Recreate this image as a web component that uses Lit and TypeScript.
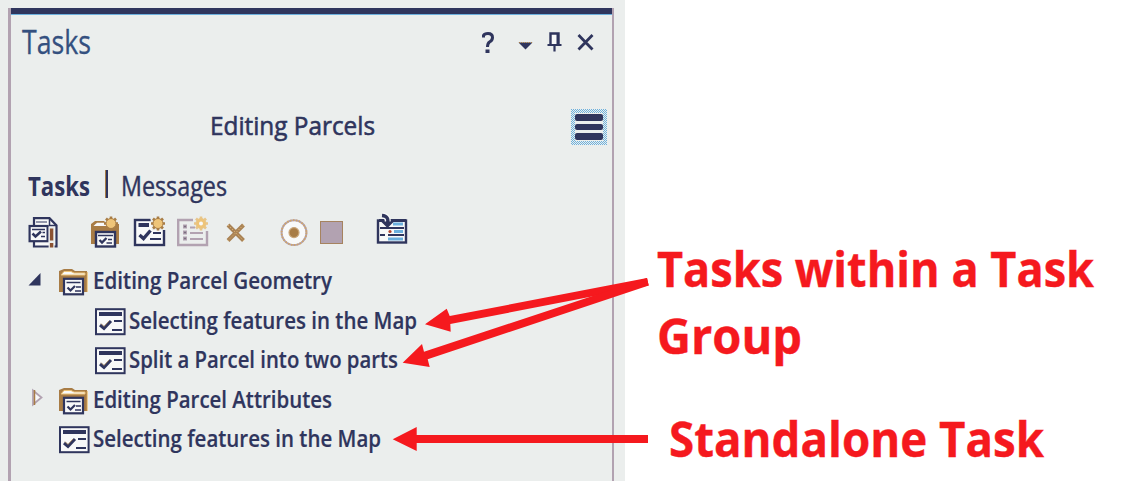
import { LitElement, html, svg, css, nothing } from "lit";
import { customElement, property } from "lit/decorators.js";

const NAVY = "#2f355d";
const GOLD = "#a87c45";
const SAND = "#eec478";
const MAUVE = "#b2a2b1";
const PAPER = "#f8f9f9";

/** One line of text set to an exact width. */
@customElement("fit-text")
class FitText extends LitElement {
  @property() text = "";
  @property({ type: Number }) width = 100;
  @property({ type: Number }) height = 39;
  @property({ type: Number }) baseline = 26;

  static styles = css`
    :host { display: block; flex: none; }
    svg { display: block; overflow: visible; }
    text { fill: currentColor; stroke: currentColor; stroke-width: var(--text-weight, 0); }
  `;

  render() {
    return html`<svg width=${this.width} height=${this.height}>
      <text x="0" y=${this.baseline} textLength=${this.width} lengthAdjust="spacingAndGlyphs">${this.text}</text>
    </svg>`;
  }
}

const sun = (x: number, y: number, rim: string = GOLD) => svg`
  <g transform="translate(${x} ${y})">
    <path d="M0-7V7M-7 0H7M-5-5L5 5M5-5L-5 5" stroke=${rim} stroke-width="2.6"/>
    <circle r="5" fill=${SAND} stroke=${rim} stroke-width="1"/>
  </g>`;

const icon = (x: number, y: number, w: number, h: number, body: unknown) =>
  html`<svg class="icon" width=${w} height=${h} viewBox="${x} ${y} ${w} ${h}" fill="none">${body}</svg>`;

const taskIcon = () => icon(0, 0, 31, 28, svg`
  <rect x="1" y="1.2" width="28.6" height="25" fill=${PAPER} stroke=${NAVY} stroke-width="2"/>
  <path d="M4 6H27" stroke=${NAVY} stroke-width="4"/>
  <path d="M19 13H27M17 22H27" stroke=${NAVY} stroke-width="2"/>
  <path d="M5 17L9 20.5L16 13" stroke=${NAVY} stroke-width="3"/>
  <path d="M6 15.5L9 18.5L14 13" stroke=${GOLD} stroke-width=".7"/>`);

const folderIcon = () => icon(0, 0, 30, 28, svg`
  <path d="M0 24V3L5 1H13L16 3H28V24Z" fill=${GOLD}/>
  <path d="M2 7L5 3.500H12L15 5H26V7Z" fill=${PAPER} stroke=${SAND} stroke-width="1"/>
  <path d="M28.300 4V24" stroke=${SAND}/>
  <rect x="5" y="10.800" width="19" height="15.500" fill=${PAPER} stroke=${NAVY} stroke-width="2.200"/>
  <path d="M7.500 14.500H21.500" stroke=${NAVY} stroke-width="1.500"/>
  <path d="M8.500 19.500L11.500 22.500L16 18" stroke=${NAVY} stroke-width="2.200"/>
  <path d="M17 19H22M16 23H22" stroke=${NAVY} stroke-width="1.500"/>`);

const toolbar = () => [
  icon(27, 210, 60, 42, svg`
    <path d="M34 218.200H49.500L56.500 225.500V246.500H34Z" fill=${PAPER} stroke=${NAVY} stroke-width="2.200"/>
    <path d="M49.500 218V225.500H57" stroke=${NAVY} stroke-width="1.500"/>
    <path d="M36 222H47" stroke=${NAVY} stroke-width="1"/>
    <rect x="29.600" y="226" width="18" height="15.200" fill=${PAPER} stroke=${NAVY} stroke-width="2.200"/>
    <path d="M32 229.500H45M42.500 232.500H45M41 236.500H45" stroke=${NAVY} stroke-width="1.300"/>
    <path d="M32.500 233.500L35.500 236.500L41 231.500" stroke=${NAVY} stroke-width="2.500"/>
    <path d="M51.600 227V248" stroke="#ebeeed" stroke-width="6"/>
    <path d="M51.600 228.500V240.500M51.600 243V247.500" stroke="#8b5232" stroke-width="3.400"/>`),
  icon(87, 210, 44, 42, svg`
    <path d="M91 244V224L95 221H104L107 224H119V244Z" fill=${GOLD}/>
    <path d="M93.500 226L97 222.800H106V226Z" fill=${PAPER}/>
    <rect x="96" y="232" width="19" height="14.500" fill=${PAPER} stroke=${NAVY} stroke-width="2.400"/>
    <path d="M98 235.500H113" stroke=${NAVY} stroke-width="1.500"/>
    <path d="M99.500 240L102 242.500L106.500 238" stroke=${NAVY} stroke-width="2.400"/>
    <path d="M108 239.500H112M106.500 243H112" stroke=${NAVY} stroke-width="1.600"/>
    ${sun(111, 223.5)}`),
  icon(131, 210, 44, 42, svg`
    <rect x="135" y="220" width="29" height="25" fill=${PAPER} stroke=${NAVY} stroke-width="2.400"/>
    <path d="M138.500 225H149" stroke=${NAVY} stroke-width="4"/>
    <path d="M153 233H161M150 239H161" stroke=${NAVY} stroke-width="2.200"/>
    <path d="M150 216H166V230H152Z" fill="#ebeeed"/>
    <path d="M139.500 235L143.500 238.500L150.500 230.500" stroke=${NAVY} stroke-width="3.400"/>
    ${sun(158, 223.5)}`),
  icon(175, 210, 44, 42, svg`
    <path d="M193 220H178.200V245H207V231" stroke=${MAUVE} stroke-width="2.400"/>
    <path d="M183 226.500H187M183 232.500H187M183 238.500H187" stroke=${MAUVE} stroke-width="4"/>
    <path d="M184 226.500H186M184 232.500H186M184 238.500H186" stroke="#78707f" stroke-width="1.500"/>
    <path d="M190 227.500H195M190 233H203M190 239H203" stroke=${MAUVE} stroke-width="2"/>
    ${sun(201, 223.5, "#e8c588")}
    <circle cx="201" cy="223.500" r="2" fill=${PAPER}/>`),
  icon(219, 210, 57, 42, svg`
    <path d="M228 225L243.500 240.500M243.500 225L228 240.500" stroke="#aa8356" stroke-width="4"/>
    <path d="M228 225L243.500 240.500M243.500 225L228 240.500" stroke=${SAND} stroke-width="1" stroke-dasharray="1 2"/>`),
  icon(276, 210, 41, 42, svg`
    <circle cx="294" cy="232.600" r="12.400" fill=${PAPER} stroke=${MAUVE} stroke-width="2"/>
    <circle cx="294" cy="232.600" r="12.400" stroke="#d2a566" stroke-width="1.800" stroke-dasharray="1.500 1.500"/>
    <circle cx="294" cy="232.600" r="5" fill=${GOLD} stroke="#c9a679" stroke-width="1.200"/>`),
  icon(317, 210, 55, 42, svg`
    <rect x="320.500" y="221.500" width="22" height="22" fill=${MAUVE} stroke="#a6835f"/>`),
  icon(372, 210, 40, 42, svg`
    <rect x="378" y="220.500" width="28" height="22" fill=${PAPER} stroke=${NAVY} stroke-width="2.400"/>
    <path d="M379 220.500H406" stroke=${NAVY} stroke-width="3"/>
    <path d="M393 224H403M394 231.500H403M388 239H403" stroke="#6cb0dd" stroke-width="3"/>
    <path d="M380 228H404M380 235H385M388 235H404" stroke=${NAVY} stroke-width="2"/>
    <circle cx="390" cy="231.500" r="1.600" fill="#b2452f"/>
    <path d="M382 215.500Q389 216 387.500 223" stroke=${PAPER} stroke-width="6"/>
    <path d="M382 215.500Q389.500 216 387.500 224" stroke=${NAVY} stroke-width="3.400"/>
    <path d="M382 221.500L387.500 227L393 221.500" fill=${NAVY} stroke=${NAVY} stroke-width="1.500"/>`),
];

interface TreeItem {
  label: string;
  width: number;
  kind: "group" | "task";
  nested?: boolean;
  open?: boolean;
}

const ITEMS: TreeItem[] = [
  { label: "Editing Parcel Geometry", width: 239, kind: "group", open: true },
  { label: "Selecting features in the Map", width: 288, kind: "task", nested: true },
  { label: "Split a Parcel into two parts", width: 269, kind: "task", nested: true },
  { label: "Editing Parcel Attributes", width: 239, kind: "group", open: false },
  { label: "Selecting features in the Map", width: 288, kind: "task" },
];

@customElement("app-root")
class AppRoot extends LitElement {
  static styles = css`
    :host {
      display: block;
      position: relative;
      width: 1125px;
      height: 489px;
      overflow: hidden;
      background: #fff;
      color: #2f355d;
      font-family: "Open Sans", "Noto Sans", sans-serif;
    }
    .page { display: flex; }
    .backdrop {
      box-sizing: border-box;
      width: 625px;
      height: 481px;
      padding: 8px 11px 0 8px;
      background: #ebeeed;
    }
    .panel {
      box-sizing: border-box;
      height: 473px;
      border-left: 3px solid #b2a2b1;
      border-right: 2px solid #b2a2b1;
    }
    .bar { height: 6px; background: #2f355d; border-bottom: 1px solid #6cb0dd; }
    .icon { display: block; flex: none; }
    .title { display: flex; height: 75px; padding-left: 11px; font-size: 33px; color: #34507f; --text-weight: 0.3px; }
    .controls { display: flex; margin-left: 386px; }
    .caption { display: flex; height: 75px; padding-left: 199px; font-size: 26px; --text-weight: 0.6px; }
    .menu {
      display: flex;
      box-sizing: border-box;
      width: 36px;
      height: 36px;
      margin: 19px 0 0 196px;
      padding: 4px;
      background: repeating-conic-gradient(#6cb0dd 0 25%, #ebeeed 0 50%) 1px 0 / 2px 2px;
    }
    .bars {
      display: flex;
      flex: 1;
      flex-direction: column;
      justify-content: center;
      gap: 3px;
      background: #ebeeed;
    }
    .bars span { height: 6.500px; border-radius: 2px; background: #2f355d; }
    .tabs { display: flex; height: 45px; padding-left: 17px; font-size: 26.500px; --text-weight: 0.4px; }
    .active { font-weight: 700; --text-weight: 0; }
    .divider { width: 2px; height: 28px; margin: 5px 13px 0 15px; background: #2f355d; border-left: 1px solid #a87c45; }
    .toolbar { display: flex; height: 53px; padding-left: 16px; }
    .tree { font-size: 23.500px; font-weight: 600; --text-weight: 0.2px; }
    .row { display: flex; height: 39.500px; align-items: center; }
    .twist { width: 48px; flex: none; margin-bottom: 2px; }
    .nested .twist { width: 84px; }
    .glyph { width: 34px; flex: none; margin-bottom: 1px; }
    .notes {
      padding: 233.500px 0 0 32px;
      color: #f5191e;
      font-family: "Open Sans", "Noto Sans", sans-serif;
      font-size: 48.500px;
      font-weight: 700;
      --text-weight: 0.4px;
    }
    .standalone { margin: 35px 0 0 12px; }
    .arrows { position: absolute; left: 0; top: 0; fill: #f5191e; }
  `;

  private row(item: TreeItem) {
    return html`<div class="row ${item.nested ? "nested" : ""}">
      <div class="twist">
        ${item.kind === "group"
          ? icon(11, 0, 48, 28, item.open
            ? svg`<path d="M28.500 17.500L40.500 5V17.500Z" fill=${NAVY}/>`
            : svg`<path d="M33 4.500L41.500 11.500L33 18.500Z" fill=${PAPER} stroke=${MAUVE} stroke-width="1.800"/><path d="M34.500 4V19" stroke=${GOLD} stroke-width="1.500"/>`)
          : nothing}
      </div>
      <div class="glyph">${item.kind === "group" ? folderIcon() : taskIcon()}</div>
      <fit-text .text=${item.label} .width=${item.width} .height=${39} .baseline=${26.2}></fit-text>
    </div>`;
  }

  render() {
    return html`
      <div class="page">
        <div class="backdrop">
          <div class="panel">
            <div class="bar"></div>
            <div class="title">
              <fit-text .text=${"Tasks"} .width=${69} .baseline=${38.5}></fit-text>
              <div class="controls">
                ${icon(477, 15, 35, 50, svg`
                  <path d="M483.500 37.500V35.500Q484.500 33.500 488 33.500Q492.500 33.500 492.500 37.500Q492.500 40.500 489.500 42Q487.500 43.500 487.500 47" stroke=${NAVY} stroke-width="3"/>
                  <path d="M487.500 49.500V53" stroke=${NAVY} stroke-width="4"/>`)}
                ${icon(512, 15, 32, 50, svg`
                  <path d="M518.500 42.500H532.500L525.500 49.500Z" fill=${NAVY}/><path d="M519 42.500H532" stroke=${GOLD} stroke-dasharray="1 1"/>`)}
                ${icon(544, 15, 29, 50, svg`
                  <path d="M550.500 45V33.500H558.500V45" fill=${PAPER} stroke=${NAVY} stroke-width="2.400"/>
                  <path d="M557.500 33V45" stroke=${NAVY} stroke-width="2"/>
                  <path d="M547.500 45H561.500M554.500 45V51.500" stroke=${NAVY} stroke-width="2.200"/>`)}
                ${icon(573, 15, 28, 50, svg`
                  <path d="M578.500 35L592.500 49.500M592.500 35L578.500 49.500" stroke=${NAVY} stroke-width="2.800"/>`)}
              </div>
            </div>
            <div class="caption">
              <fit-text .text=${"Editing Parcels"} .width=${165} .height=${55} .baseline=${45}></fit-text>
              <div class="menu"><div class="bars"><span></span><span></span><span></span></div></div>
            </div>
            <div class="tabs">
              <fit-text class="active" .text=${"Tasks"} .width=${62} .baseline=${30.5}></fit-text>
              <div class="divider"></div>
              <fit-text .text=${"Messages"} .width=${106} .baseline=${30.5}></fit-text>
            </div>
            <div class="toolbar">${toolbar()}</div>
            <div class="tree">${ITEMS.map((item) => this.row(item))}</div>
          </div>
        </div>
        <div class="notes">
          <fit-text .text=${"Tasks within a Task"} .width=${437} .height=${67.5} .baseline=${53}></fit-text>
          <fit-text .text=${"Group"} .width=${145} .height=${67.5} .baseline=${53}></fit-text>
          <fit-text class="standalone" .text=${"Standalone Task"} .width=${375} .height=${68} .baseline=${53}></fit-text>
        </div>
      </div>
      <svg class="arrows" width="1125" height="489">
        <path d="M425 324.300L446.700 308.700L449.700 316L647 278L648.700 285.500L450.300 324L450.700 331.700Z"/>
        <path d="M402.700 362.700L422 344L424 351.700L647 278L648.700 285.500L427.700 359.300L429.700 367Z"/>
        <path d="M392.700 439.300L416.700 427V435H648V443H416.700V451Z"/>
      </svg>
    `;
  }
}
